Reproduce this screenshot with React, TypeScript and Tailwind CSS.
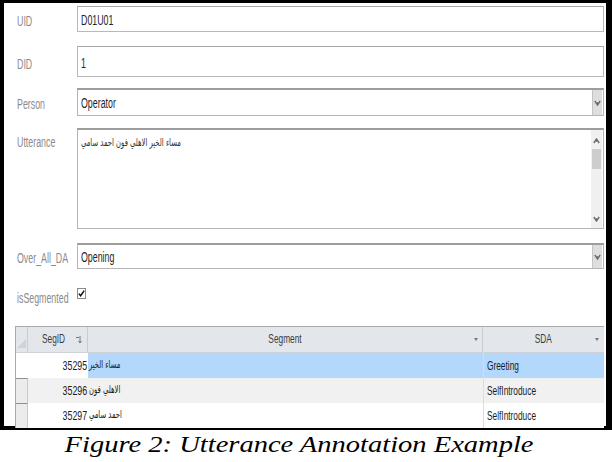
import React from 'react';

// text in the screenshot is horizontally squeezed, so spans are scaled on x
const sq = 'inline-block origin-left scale-x-[0.57] whitespace-nowrap';
const sqT = 'inline-block origin-left scale-x-[0.64] whitespace-nowrap';

function Chevron({ up = false }: { up?: boolean }) {
  return (
    <svg width="7" height="6" viewBox="0 0 7 6" className={up ? 'rotate-180' : ''}>
      <path d="M0.8 1 L3.5 5 L6.2 1" fill="none" stroke="#6b6b6b" strokeWidth="1.4" />
      <path d="M3.5 2.2 L3.5 4.6" stroke="#6b6b6b" strokeWidth="1" />
    </svg>
  );
}

function Label({ children, top = false }: { children: React.ReactNode; top?: boolean }) {
  return (
    <div className={`w-[62px] shrink-0 pl-[2px] text-[15.5px] text-[#8a8a8a] ${top ? 'pt-[2px]' : 'flex items-center pt-[3px]'}`}>
      <span className={sq}>{children}</span>
    </div>
  );
}

function TextBox({ value, h }: { value: string; h: string }) {
  return (
    <div className={`flex-1 ${h} border border-[#b9b9b9] border-t-[#a6a6a6] bg-white flex items-center pl-[3px] pt-[2px] text-[15.5px] text-[#262626]`}>
      <span className={sq}>{value}</span>
    </div>
  );
}

function Select({ value, h }: { value: string; h: string }) {
  return (
    <div className={`flex-1 ${h} border border-[#b4b4b4] border-t-2 border-t-[#9d9d9d] bg-white flex items-center pl-[3px] pr-px text-[15.5px] text-[#1f1f1f]`}>
      <div className="flex-1">
        <span className={sq}>{value}</span>
      </div>
      <div className="w-[10px] h-full my-px bg-[#dedede] border-l border-[#c4c4c4] flex items-center justify-center">
        <Chevron />
      </div>
    </div>
  );
}

const rows = [
  { id: '35295', seg: 'مساء الخير', sda: 'Greeting', sel: true },
  { id: '35296', seg: 'الاهلي فون', sda: 'SelfIntroduce', alt: true },
  { id: '35297', seg: 'احمد سامي', sda: 'SelfIntroduce' },
];

export default function App() {
  return (
    <div className="w-[612px] h-[462px] bg-white overflow-hidden font-['Liberation_Sans','DejaVu_Sans',sans-serif]">
      <div className="h-[430px] border-black border-l-4 border-t-[3px] border-r-[6px] border-b-4 flex flex-col pl-[11px] pr-[2px]">
        <div className="flex mt-[3px]">
          <Label>UID</Label>
          <TextBox value="D01U01" h="h-[26px]" />
        </div>
        <div className="flex mt-[14px]">
          <Label>DID</Label>
          <TextBox value="1" h="h-[31px]" />
        </div>
        <div className="flex mt-[11px]">
          <Label>Person</Label>
          <Select value="Operator" h="h-[28px]" />
        </div>
        <div className="flex mt-[12px]">
          <Label top>Utterance</Label>
          <div className="flex-1 h-[101px] border border-[#b4b4b4] border-t-2 border-t-[#9d9d9d] bg-white flex">
            <div className="flex-1 pl-[3px] pt-[5px] text-[11px] text-[#333] font-['DejaVu_Sans',sans-serif]">
              <span dir="rtl" className="inline-block origin-left scale-x-[0.62] whitespace-nowrap">مساء الخير الاهلي فون احمد سامي</span>
            </div>
            <div className="w-[11px] mr-px bg-[#f0f0f0] flex flex-col items-center pt-[8px] pb-[6px]">
              <Chevron up />
              <div className="w-[9px] h-[20px] mt-[5px] bg-[#cdcdcd]" />
              <div className="flex-1" />
              <Chevron />
            </div>
          </div>
        </div>
        <div className="flex mt-[14px]">
          <Label>Over_All_DA</Label>
          <Select value="Opening" h="h-[26px]" />
        </div>
        <div className="flex mt-[18px] h-[14px]">
          <div className="w-[62px] shrink-0 pl-[2px] pt-px text-[15.5px] text-[#8a8a8a] leading-[18px]">
            <span className={sq}>isSegmented</span>
          </div>
          <div className="w-[9px] h-[11px] border border-[#8a8a8a] bg-white flex items-center justify-center">
            <svg width="7" height="7" viewBox="0 0 7 7">
              <path d="M0.8 3.6 L2.6 5.8 L6.2 0.6" fill="none" stroke="#111" strokeWidth="1.5" />
            </svg>
          </div>
        </div>

        <div className="mt-[24px] border-t border-l border-[#a9a9a9] text-[13px]">
          <div className="grid grid-cols-[12px_60px_395px_1fr] h-[26px] bg-[#e3e6ea] text-[#3c3c3c] border-b border-[#cfd3d8]">
            <div className="border-r border-[#c9ccd0] flex items-end justify-end pb-[4px] pr-px">
              <svg width="9" height="9" viewBox="0 0 9 9">
                <path d="M9 0 L9 9 L0 9 Z" fill="#d0d3d7" />
              </svg>
            </div>
            <div className="relative flex items-center pl-[14px] border-r border-[#c9ccd0]">
              <span className={sqT}>SegID</span>
              <svg width="6" height="8" viewBox="0 0 6 8" className="absolute right-[5px] top-[9px]">
                <path d="M0 1.5 L3 1.5" stroke="#777" strokeWidth="1" />
                <path d="M4 0 L4 7" stroke="#777" strokeWidth="1" />
                <path d="M2.5 5 L4 7 L5.5 5" fill="none" stroke="#777" strokeWidth="1" />
              </svg>
            </div>
            <div className="relative flex items-center justify-center border-r border-[#c9ccd0]">
              <span className="inline-block origin-center scale-x-[0.64] whitespace-nowrap">Segment</span>
              <span className="absolute right-[4px] top-[11px] w-0 h-0 border-l-[2px] border-r-[2px] border-t-[3px] border-transparent border-t-[#777]" />
            </div>
            <div className="relative flex items-center justify-center">
              <span className="inline-block origin-center scale-x-[0.64] whitespace-nowrap">SDA</span>
              <span className="absolute right-[5px] top-[11px] w-0 h-0 border-l-[2px] border-r-[2px] border-t-[3px] border-transparent border-t-[#777]" />
            </div>
          </div>
          {rows.map((r) => (
            <div key={r.id} className={`grid grid-cols-[12px_60px_395px_1fr] h-[25px] text-[#1c1c1c] ${r.alt ? 'bg-[#f1f1f1]' : 'bg-white'}`}>
              <div className={r.sel ? 'bg-white' : 'border-t border-[#8f8f8f] border-r border-r-[#c9c9c9] bg-[#ececec]'} />
              <div className="flex items-center justify-end pr-px pt-[2px]">
                <span className="inline-block origin-right scale-x-[0.68] whitespace-nowrap">{r.id}</span>
              </div>
              <div className={`flex items-center pl-px pt-[1px] text-[11px] font-['DejaVu_Sans',sans-serif] ${r.sel ? 'bg-[#b4d8fb]' : ''}`}>
                <span dir="rtl" className="inline-block origin-left scale-x-[0.62] whitespace-nowrap">{r.seg}</span>
              </div>
              <div className={`flex items-center pl-[3px] pt-[2px] border-l border-[#dcdcdc] ${r.sel ? 'bg-[#b4d8fb]' : ''}`}>
                <span className={sqT}>{r.sda}</span>
              </div>
            </div>
          ))}
        </div>
      </div>
      <div className="h-[32px] flex justify-center items-start pr-[14px]">
        <span className="inline-block origin-center scale-x-[1.24] whitespace-nowrap italic text-[23px] leading-[30px] text-black font-['Liberation_Serif','Times_New_Roman',serif]">
          Figure 2: Utterance Annotation Example
        </span>
      </div>
    </div>
  );
}
